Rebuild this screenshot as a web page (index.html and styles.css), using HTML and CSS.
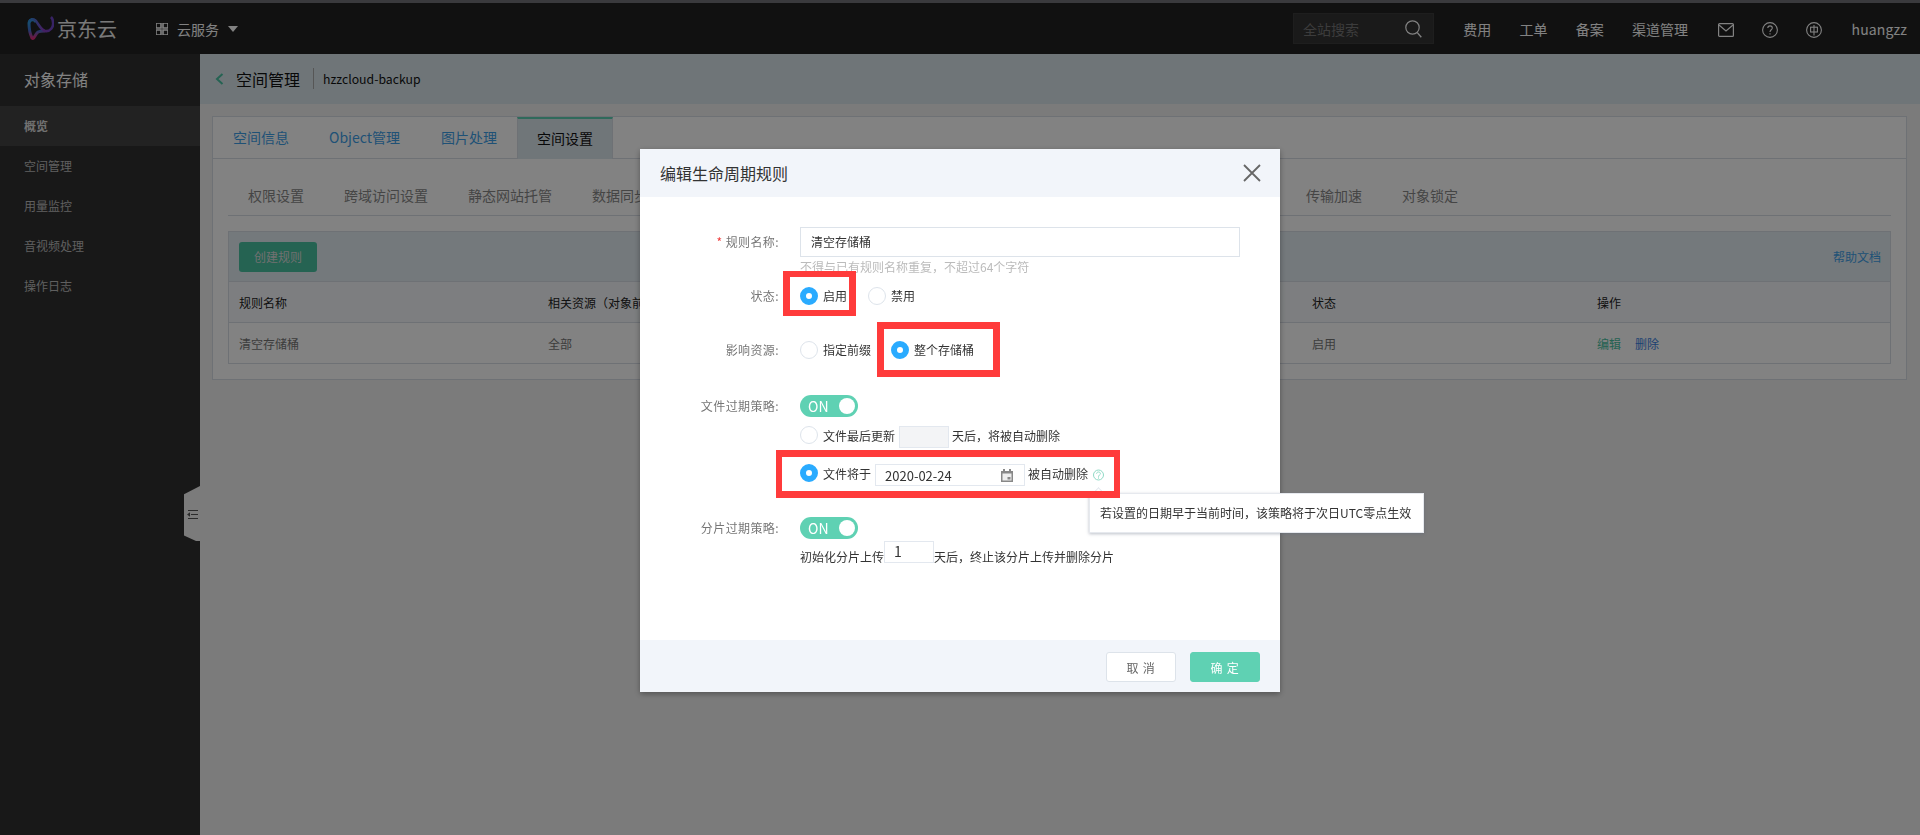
FILE: index.html
```html
<!DOCTYPE html>
<html lang="zh-CN">
<head>
<meta charset="utf-8">
<title>对象存储</title>
<link rel="stylesheet" href="styles.css">
</head>
<body>
<div class="strip"></div>
<header class="topbar">
  <div class="logo">
    <svg class="logo-mark" width="27" height="25" viewBox="0 0 27 25">
      <defs>
        <linearGradient id="lg" x1="0" y1="0" x2="0" y2="1"><stop offset="0" stop-color="#2aa6e0"/><stop offset=".55" stop-color="#3f6fd0"/><stop offset="1" stop-color="#e02c7c"/></linearGradient>
        <linearGradient id="lh" x1="0" y1="0" x2="1" y2="0"><stop offset="0" stop-color="#2a8fdc"/><stop offset=".6" stop-color="#8a3cc0"/><stop offset="1" stop-color="#6a46c8"/></linearGradient>
      </defs>
      <path d="M9 6C7 3 3 3 2 7C2 12 3 18 5 22C7 24 8 18 11 16C13 15 16 15 18 15" fill="none" stroke="url(#lg)" stroke-width="3"/>
      <path d="M2 6C3 3 6 2 9 5C12 9 14 14 18 15C23 16 27 11 26 6C26 4 25 2 24 1" fill="none" stroke="url(#lh)" stroke-width="2.6"/>
    </svg>
    <span class="logo-text">京东云</span>
  </div>
  <div class="product">
    <svg width="12" height="12" viewBox="0 0 12 12"><path d="M0 0h5v5H0zM7 0h5v5H7zM0 7h5v5H0zM7 7h5v5H7z" fill="none" stroke="#fff" stroke-width="1.6"/></svg>
    <span class="product-name">云服务</span>
    <span class="caret"></span>
  </div>
  <div class="top-right">
    <div class="search"><span>全站搜索</span>
      <svg width="17" height="18" viewBox="0 0 17 18"><circle cx="7.5" cy="7.5" r="6.7" fill="none" stroke="#fff" stroke-width="1.2"/><path d="M12.3 12.6l4 4.6" stroke="#fff" stroke-width="1.4"/></svg>
    </div>
    <a class="nav">费用</a><a class="nav">工单</a><a class="nav">备案</a><a class="nav nav-last">渠道管理</a>
    <svg class="ticon" width="16" height="14" viewBox="0 0 16 14"><rect x=".6" y=".6" width="14.8" height="12.8" rx="1" fill="none" stroke="#fff" stroke-width="1.2"/><path d="M1 2l7 6 7-6" fill="none" stroke="#fff" stroke-width="1.2"/></svg>
    <svg class="ticon" width="16" height="16" viewBox="0 0 16 16"><circle cx="8" cy="8" r="7.4" fill="none" stroke="#fff" stroke-width="1.1"/><path d="M5.8 6C5.8 3.2 10.3 3.2 10.3 6C10.3 7.8 8 7.8 8 10M8 11.3v1.3" fill="none" stroke="#fff" stroke-width="1.1"/></svg>
    <svg class="ticon" width="16" height="16" viewBox="0 0 16 16"><circle cx="8" cy="8" r="7.4" fill="none" stroke="#fff" stroke-width="1.1"/><rect x="4.6" y="5.2" width="6.8" height="4.8" fill="none" stroke="#fff" stroke-width="1.1"/><path d="M8 3v10.5" stroke="#fff" stroke-width="1.1"/></svg>
    <a class="nav user">huangzz</a>
  </div>
</header>
<div class="layout">
  <aside class="sidebar">
    <div class="side-title">对象存储</div>
    <div class="side-item active">概览</div>
    <div class="side-item">空间管理</div>
    <div class="side-item">用量监控</div>
    <div class="side-item">音视频处理</div>
    <div class="side-item">操作日志</div>
    <div class="collapse">
      <svg width="11" height="9" viewBox="0 0 11 9"><path d="M1 .5h10M4 4.5h7M1 8.5h10" stroke="#555" stroke-width="1"/><path d="M0 4.5l3-2.2v4.4z" fill="#555"/></svg>
    </div>
  </aside>
  <main class="content">
    <div class="crumb">
      <svg width="9" height="12" viewBox="0 0 9 12"><path d="M7.5 1L2 6l5.5 5" fill="none" stroke="#49c2a2" stroke-width="2"/></svg>
      <span class="crumb-title">空间管理</span>
      <span class="crumb-name">hzzcloud-backup</span>
    </div>
    <section class="card">
      <nav class="tabs">
        <a class="tab">空间信息</a><a class="tab tab-wide">Object管理</a><a class="tab">图片处理</a><a class="tab on">空间设置</a>
      </nav>
      <div class="card-body">
        <div class="subtabs">
          <span>权限设置</span><span>跨域访问设置</span><span>静态网站托管</span><span>数据同步</span><i class="sub-gap"></i><span>传输加速</span><span>对象锁定</span>
        </div>
        <div class="box">
          <div class="toolbar"><button class="create">创建规则</button><a class="help">帮助文档</a></div>
          <div class="grid head"><span>规则名称</span><span>相关资源&#65288;对象前缀&#65289;</span><span>状态</span><span>操作</span></div>
          <div class="grid"><span>清空存储桶</span><span>全部</span><span>启用</span><span><a class="edit">编辑</a><a class="del">删除</a></span></div>
        </div>
      </div>
    </section>
  </main>
</div>
<div class="mask"></div>
<div class="modal">
  <div class="m-head"><span>编辑生命周期规则</span>
    <svg width="18" height="18" viewBox="0 0 18 18"><path d="M1 1l16 16M17 1L1 17" stroke="#666" stroke-width="1.8"/></svg>
  </div>
  <div class="m-body">
    <div class="row r-name">
      <label class="lbl"><em>*</em> 规则名称:</label>
      <div class="ctl">
        <div class="text-input">清空存储桶</div>
        <div class="hint">不得与已有规则名称重复&#65292;不超过64个字符</div>
      </div>
    </div>
    <div class="row r-status">
      <label class="lbl">状态:</label>
      <div class="ctl radios">
        <span class="radio on"></span><span class="rt w-a">启用</span>
        <span class="radio"></span><span class="rt">禁用</span>
      </div>
    </div>
    <div class="row r-res">
      <label class="lbl">影响资源:</label>
      <div class="ctl radios">
        <span class="radio"></span><span class="rt w-b">指定前缀</span>
        <span class="radio on"></span><span class="rt">整个存储桶</span>
      </div>
    </div>
    <div class="row r-file">
      <label class="lbl">文件过期策略:</label>
      <div class="ctl">
        <div class="toggle"><span>ON</span><i></i></div>
        <div class="opt o1"><span class="radio"></span><span class="rt">文件最后更新</span><div class="num off"></div><span class="rt">天后&#65292;将被自动删除</span></div>
        <div class="opt o2"><span class="radio on"></span><span class="rt">文件将于</span>
          <div class="date"><span>2020-02-24</span>
            <svg width="12" height="13" viewBox="0 0 12 13"><path d="M0 2h2V0h2v2h4V0h2v2h2v11H0z" fill="#888"/><rect x="1.5" y="4.5" width="9" height="7" fill="#eee"/><rect x="6.5" y="8" width="3" height="2.5" fill="#888"/></svg>
          </div>
          <span class="rt">被自动删除</span>
          <svg class="qm" width="11" height="12" viewBox="0 0 11 12"><circle cx="5.5" cy="6" r="5" fill="none" stroke="#8fd9c5" stroke-width="1"/><path d="M3.6 4.7C3.6 2.4 7.4 2.4 7.4 4.7C7.4 6 5.5 6 5.5 7.8M5.5 8.4v1.2" fill="none" stroke="#8fd9c5" stroke-width="1"/></svg>
        </div>
      </div>
    </div>
    <div class="row r-part">
      <label class="lbl">分片过期策略:</label>
      <div class="ctl">
        <div class="toggle"><span>ON</span><i></i></div>
        <div class="opt o3"><span class="rt">初始化分片上传</span><div class="num">1</div><span class="rt">天后&#65292;终止该分片上传并删除分片</span></div>
      </div>
    </div>
  </div>
  <div class="m-foot"><button class="btn">取 消</button><button class="btn ok">确 定</button></div>
  <div class="tip">若设置的日期早于当前时间&#65292;该策略将于次日UTC零点生效</div>
  <div class="mark mark-1"></div>
  <div class="mark mark-2"></div>
  <div class="mark mark-3"></div>
</div>
</body>
</html>
```
FILE: styles.css
```css
* { box-sizing: border-box; }
html, body { margin: 0; height: 100%; overflow: hidden; }
body { font-family: "Noto Sans CJK SC", "Liberation Sans", sans-serif; font-size: 12px; color: #333; background: #f2f2f2; display: flex; flex-direction: column; height: 835px; }
.strip { height: 3px; background: #727278; flex: none; }
.topbar { height: 51px; flex: none; background: #222; display: flex; align-items: center; color: #fff; padding: 0 13px 0 27px; }
.logo { display: flex; align-items: center; }
.logo-text { font-size: 20px; margin-left: 3px; color: #eee; line-height: 24px; }
.product { display: flex; align-items: center; margin-left: 39px; font-size: 14px; }
.product-name { margin-left: 9px; }
.caret { margin-left: 9px; width: 0; height: 0; border: 5px solid transparent; border-top: 6px solid #fff; border-bottom: 0; }
.top-right { margin-left: auto; display: flex; align-items: center; gap: 28.25px; font-size: 14px; }
.search { width: 141px; height: 31px; margin-right: 1px; background: #333; border: 1px solid #3c3c3c; display: flex; align-items: center; justify-content: space-between; padding: 0 11px 0 9px; }
.search span { color: #777; }
.nav { color: #fff; }
.nav-last { margin-right: 1.5px; }
.user { letter-spacing: .15px; margin-left: 1px; }
.ticon { margin-top: 3px; }
.layout { flex: 1; display: flex; min-height: 0; }
.sidebar { width: 200px; flex: none; background: #303030; color: #ddd; position: relative; }
.side-title { height: 52px; line-height: 50px; font-size: 16px; padding-left: 24px; color: #fff; }
.side-item { height: 40px; line-height: 40px; padding-left: 24px; color: #bbb; }
.side-item.active { background: #444; font-weight: 700; color: #ddd; }
.collapse { position: absolute; left: 184px; top: 432px; width: 16px; height: 55px; background: #f2f2f2; clip-path: polygon(100% 0, 100% 100%, 75% 100%, 0 90%, 0 15%); display: flex; align-items: center; justify-content: center; padding-top: 1px; }
.content { flex: 1; min-width: 0; }
.crumb { height: 50px; background: #d9e6ec; display: flex; align-items: center; padding-left: 15px; color: #111; }
.crumb-title { font-size: 16px; margin-left: 12px; padding-right: 14px; position: relative; line-height: 22px; }
.crumb-title::after { content: ""; position: absolute; right: 0; top: 0; bottom: 1px; border-right: 1px solid #aaa; }
.crumb-name { margin-left: 9px; font-size: 12.25px; }
.card { margin: 12px 13px 0 12px; background: #fff; border: 1px solid #d8dde6; }
.tabs { height: 42px; display: flex; border-bottom: 1px solid #d8dde6; font-size: 14px; }
.tab { padding: 0 20px; line-height: 41px; color: #3ea0e8; }
.tab-wide { width: 112px; }
.tab.on { color: #111; background: #dce7ee; border: solid #d8dde6; border-width: 2px 1px 0; border-top-color: #5fd1b3; height: 42px; padding: 0 19px; line-height: 39px; }
.card-body { padding: 0 15px 15px; }
.subtabs { height: 57px; padding: 15px 0 0 20px; border-bottom: 1px solid #d8dde6; display: flex; align-items: center; gap: 40px; font-size: 14px; color: #888; }
.sub-gap { width: 578px; flex: none; }
.box { margin-top: 15px; border: 1px solid #d8dde6; }
.toolbar { height: 50px; background: #e3edf3; border-bottom: 1px solid #d8dde6; display: flex; align-items: center; justify-content: space-between; padding: 0 9px 0 10px; }
.create { width: 78px; height: 30px; background: #49c2a2; border: 0; border-radius: 3px; color: #ddd; font: inherit; font-size: 12px; padding: 0; }
.help { color: #3ea0e8; }
.grid { height: 41px; display: grid; grid-template-columns: 309px 764px 285px 1fr; align-items: center; padding-left: 10px; border-bottom: 1px solid #d8dde6; color: #777; }
.grid:last-child { border-bottom: 0; height: 40px; }
.grid.head { background: #f5f8fb; color: #222; }
.edit { color: #49c2a2; margin-right: 14px; }
.del { color: #3a80e0; }
.mask { position: fixed; inset: 0; background: rgba(0,0,0,.49); }
.modal { position: fixed; left: 640px; top: 149px; width: 640px; height: 543px; background: #fff; box-shadow: 0 2px 6px rgba(0,0,0,.35); display: flex; flex-direction: column; }
.m-head { height: 48px; flex: none; background: #f2f5fa; display: flex; align-items: center; justify-content: space-between; padding: 0 19px 0 20px; font-size: 16px; color: #333; }
.m-body { flex: 1; padding-top: 30px; }
.row { display: flex; }
.lbl { width: 139px; flex: none; text-align: right; color: #777; line-height: 22px; letter-spacing: .4px; }
.lbl em { color: #f04040; font-style: normal; }
.ctl { margin-left: 21px; flex: 1; min-width: 0; }
.text-input { width: 440px; height: 30px; border: 1px solid #dde3ea; line-height: 28px; padding-left: 10px; color: #333; }
.hint { height: 19px; line-height: 19px; color: #bbb; }
.r-name .lbl { line-height: 30px; }
.r-status { margin-top: 8px; height: 24px; }
.r-status .lbl, .r-res .lbl { line-height: 24px; }
.r-res { margin-top: 30px; height: 24px; }
.r-file { margin-top: 33px; }
.r-part { margin-top: 31px; }
.radios { display: flex; align-items: center; }
.radio { width: 18px; height: 18px; flex: none; border-radius: 50%; border: 1px solid #dde3ea; background: #fff; }
.radio.on { border: 6px solid #2aabff; }
.rt { margin-left: 5px; color: #333; line-height: 20px; white-space: nowrap; }
.w-a { margin-right: 21px; }
.w-b { margin-right: 20px; }
.toggle { width: 58px; height: 22px; border-radius: 11px; background: #5fd1b3; color: #fff; display: flex; align-items: center; justify-content: space-between; padding: 0 3px 0 8px; font-size: 14px; }
.toggle i { width: 16px; height: 16px; border-radius: 50%; background: #fff; }
.opt { display: flex; align-items: flex-start; }
.o1 { margin-top: 9px; }
.o2 { margin-top: 16px; }
.o3 { margin-top: 2px; }
.o3 .rt { margin-left: 0; margin-top: 6px; }
.num { width: 50px; height: 22px; border: 1px solid #e3e8ef; margin: 0 3px 0 4px; padding: 0 0 0 9px; font-size: 14px; line-height: 18px; color: #333; }
.num + .rt, .date + .rt { margin-left: 0; }
.o3 .num { margin: 0; }
.num.off { background: #f3f4f6; }
.date { width: 150px; height: 22px; margin: 0 3px 0 4px; border: 1px solid #e3e8ef; display: flex; align-items: center; justify-content: space-between; padding: 0 11px 0 9px; font-size: 13px; color: #333; }
.qm { margin: 5px 0 0 5px; flex: none; }
.m-foot { height: 52px; flex: none; background: #f2f5fa; display: flex; justify-content: flex-end; align-items: flex-start; gap: 14px; padding: 12px 20px 0 0; }
.btn { width: 70px; height: 30px; background: #fff; border: 1px solid #dde3ea; border-radius: 3px; color: #666; font: inherit; letter-spacing: .8px; padding: 0; }
.btn.ok { background: #5fd1b3; border-color: #5fd1b3; color: #fff; }
.mark { position: absolute; border: solid #ff3b3b; }
.mark-1 { left: 143px; top: 122px; width: 73px; height: 45px; border-width: 6px 7px; }
.mark-2 { left: 237px; top: 173px; width: 123px; height: 55px; border-width: 7px; }
.mark-3 { left: 136px; top: 301px; width: 344px; height: 48px; border-width: 7px 6px; }
.tip { position: absolute; left: 449px; top: 344px; width: 335px; height: 40px; background: #fff; border: 1px solid #e6e9ee; box-shadow: 0 1px 3px rgba(90,100,120,.4); line-height: 38px; padding-left: 10px; color: #333; white-space: nowrap; }
.tip::before { content: ""; position: absolute; left: 4px; top: -5px; width: 8px; height: 8px; background: #fff; border: solid #e3e7ee; border-width: 1px 0 0 1px; transform: rotate(45deg); }
```
